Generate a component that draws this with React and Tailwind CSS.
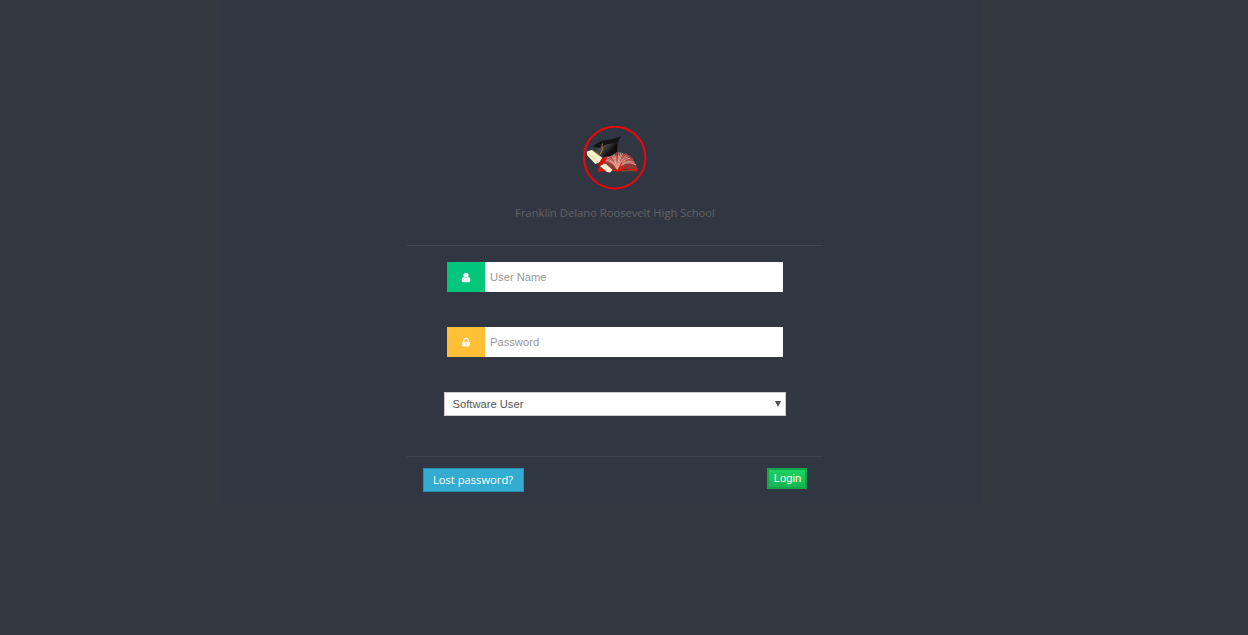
const petals = [-70, -62, -54, -46, -38, -30, -22, -14, -6, 6, 14, 22, 30, 38, 46, 54, 62, 70, 78];

function Logo() {
  return (
    <svg className="block h-16 w-16" viewBox="0 0 64 64" aria-hidden="true">
      <defs>
        <linearGradient id="cap" x1="0" y1="0" x2="1" y2="0.6">
          <stop offset="0" stopColor="#141414" />
          <stop offset=".45" stopColor="#4a4d4f" />
          <stop offset=".8" stopColor="#0c0c0c" />
        </linearGradient>
      </defs>
      <circle cx="31.7" cy="31.6" r="30.8" fill="none" stroke="#f20508" strokeWidth="2" />
      <path d="M15 44 20 33 26 28 31 30 35 30 43 27 50 32 55 44 40 42.500 34.500 44 29 43z" fill="#8f3c39" />
      {petals.map((x, i) => (
        <path
          key={x}
          d={`M34.500 43.500 Q${34.5 + x * 0.09} 33 ${34.5 + x * 0.24} ${26 + (x * x) / 480}`}
          fill="none"
          stroke={i % 4 === 0 ? "#e25a4e" : "#e3aea0"}
          strokeWidth="0.9"
        />
      ))}
      <path d="m34.500 44 4-8 .5 1-2 6 11-3.500-9 4.500 14-1.500 2 3-16-.8-5 1-5-1-14.500 1 1.500-3.500z" fill="#ee0f0c" />
      <path d="m38 45 13-.6" stroke="#6b5a2c" strokeWidth="1" />
      <path d="m11 20 7-4 11-2 7 0-1.500 4-.5 8-5 3.500-7 1.500-5-1-4-4z" fill="url(#cap)" />
      <path d="m10 20 8-5 11-2 9.500-2.500-3.500 4.500-4 2-6 1-9 4z" fill="#111314" />
      <path d="M19.500 17.500q-1.500 3 0 6l-2.500 5" fill="none" stroke="#b98125" />
      <path d="m3.800 25.500 5-1.500 10.500 8-3 4.500-4 1.500L4 29z" fill="#f8f3c8" />
      <path d="m9 24 10.500 8M5 27l10 9" fill="none" stroke="#cfc38f" strokeWidth=".6" />
      <path d="m18 37 5 1 6.500 6-2.500 2.500-3-.5-7-6z" fill="#fff2cf" />
      <path d="m19 32.500 5.500-1-4.500 7-4 2-1-1z" fill="#ee0506" />
    </svg>
  );
}

function UserIcon() {
  return (
    <svg className="h-[11px] w-[12px]" viewBox="0 0 1792 1792" preserveAspectRatio="none" fill="currentColor" aria-hidden="true">
      <path d="M1536 1399q0 109-62.500 187t-150.500 78H469q-88 0-150.500-78T256 1399q0-85 8.500-160.500t31.500-152 58.500-131 94-89T576 832q131 128 320 128t320-128q76 0 134.500 34.500t94 89 58.500 131 31.500 152 8.500 160.500zM1280 512q0 159-112.500 271.500T896 896 624.500 783.500 512 512t112.500-271.500T896 128t271.500 112.500T1280 512z" />
    </svg>
  );
}

function LockIcon() {
  return (
    <svg className="h-[11px] w-[12px]" viewBox="0 0 1792 1792" preserveAspectRatio="none" fill="currentColor" aria-hidden="true">
      <path fillOpacity=".9" d="M640 768h512V576q0-106-75-181t-181-75-181 75-75 181v192zm832 96v576q0 40-28 68t-68 28H416q-40 0-68-28t-28-68V864q0-40 28-68t68-28h32V576q0-184 132-316t316-132 316 132 132 316v192h32q40 0 68 28t28 68z" />
      <path d="M896 900v420" stroke="#ffd87f" strokeWidth="150" />
    </svg>
  );
}

export default function App() {
  return (
    <main className="h-[635px] bg-[#343841] font-['Open_Sans',sans-serif] text-[11.2px]">
      <div className="ml-[220px] h-[504px] w-[761px] bg-[#313742] pl-[187px] pt-[126px]">
        <div className="w-[416px]">
          <header className="flex h-[120px] flex-col items-center border-b border-[#414651]">
            <Logo />
            <h1 className="mt-[15px] whitespace-nowrap text-[11.2px] leading-4 text-[#626262]">
              Franklin Delano Roosevelt High School
            </h1>
          </header>

          <form onSubmit={(e) => e.preventDefault()}>
            <div className="flex h-[211px] flex-col border-b border-[#414651] pt-4 font-['Liberation_Sans',sans-serif]">
              <label className="mx-10 flex h-[30px] bg-white">
                <span className="flex w-[38px] items-center justify-center bg-[#02c77b] text-white">
                  <UserIcon />
                </span>
                <input aria-label="User Name" placeholder="User Name" className="min-w-0 flex-1 bg-white px-[5px] text-[11.2px] text-[#555] outline-none placeholder:text-[#999]" />
              </label>
              <label className="mx-10 mt-[35px] flex h-[30px] bg-white">
                <span className="flex w-[38px] items-center justify-center bg-[#ffbf37] text-white">
                  <LockIcon />
                </span>
                <input type="password" aria-label="Password" placeholder="Password" className="min-w-0 flex-1 bg-white px-[5px] text-[11.2px] text-[#555] outline-none placeholder:text-[#999]" />
              </label>
              <button type="button" className="mx-[37px] mt-[35px] flex h-6 items-center justify-between border border-[#ccc] bg-white pl-[7.500px] pr-1 text-[11.2px] text-[#555]">
                <span>Software User</span>
                <svg className="h-[6px] w-[6px]" viewBox="0 0 6 6" fill="#505050"><path d="M0 0h6L3 6z" /></svg>
              </button>
            </div>

            <div className="flex items-start justify-between px-4 pt-[11px]">
              <button type="button" className="h-6 w-[101px] border border-[#2993b3] bg-[#34abd0] pr-px text-[11.2px] leading-[22px] text-white">
                Lost password?
              </button>
              <button type="submit" className="h-[21px] w-10 border-2 border-[#12a54a] bg-linear-to-b from-[#1bd260] to-[#16b553] pl-px font-['Liberation_Sans',sans-serif] text-[11.2px] leading-[17px] text-white">
                Login
              </button>
            </div>
          </form>
        </div>
      </div>
    </main>
  );
}
